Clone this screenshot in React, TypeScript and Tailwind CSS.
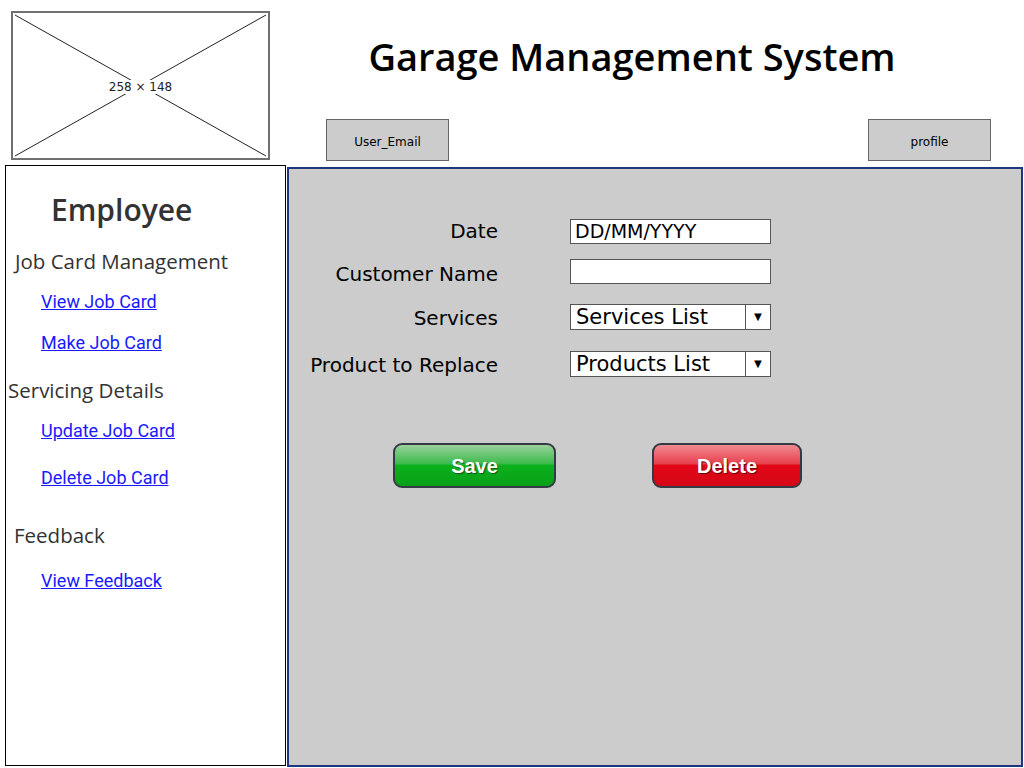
import React from "react";

const sketch = { fontFamily: "'DejaVu Sans', sans-serif" };
const heading = { fontFamily: "'Open Sans', sans-serif" };
const roboto = { fontFamily: "Roboto, sans-serif" };

const links1 = ["View Job Card", "Make Job Card"];

const Placeholder = () => (
  <div className="relative ml-[11px] mt-[11px] w-[259px] h-[149px] border-2 border-[#707070] bg-white">
    <svg className="absolute inset-0" width="255" height="145" viewBox="0 0 255 145">
      <line x1="2" y1="2" x2="253" y2="143" stroke="#222" strokeWidth="1" />
      <line x1="253" y1="2" x2="2" y2="143" stroke="#222" strokeWidth="1" />
    </svg>
    <div className="absolute inset-0 flex items-center justify-center pt-[3px]">
      <span className="bg-white px-[1px] text-[12px] leading-[14px] text-[#222]" style={sketch}>258 × 148</span>
    </div>
  </div>
);

const Field = ({ label, value, nudge }: { label: string; value?: string; nudge?: boolean }) => (
  <div className="flex items-center h-[25px]">
    <div className={"w-[209px] text-right text-[20px] leading-[25px] text-black" + (nudge ? " pt-[6px]" : "")} style={sketch}>{label}</div>
    <div className="ml-[72px] w-[201px] h-[25px] bg-white border border-[#555] px-[4px] flex items-center text-[19px] leading-[23px] text-black" style={sketch}>
      {value}
    </div>
  </div>
);

const Select = ({ label, value }: { label: string; value: string }) => (
  <div className="flex items-center h-[26px]">
    <div className="w-[209px] text-right text-[20px] leading-[25px] pt-[2px] text-black" style={sketch}>{label}</div>
    <div className="ml-[72px] w-[201px] h-[26px] bg-white border border-[#555] flex items-center">
      <span className="flex-1 px-[5px] text-[21px] leading-[24px] text-black" style={sketch}>{value}</span>
      <span className="w-[25px] h-full border-l border-[#555] flex items-center justify-center text-[13px] text-black">▼</span>
    </div>
  </div>
);

export default function App() {
  return (
    <div className="w-[1024px] h-[768px] bg-white overflow-hidden">
      <div className="flex h-[165px]">
        <Placeholder />
        <div className="flex-1 flex flex-col">
          <h1 className="mt-[33px] pr-[30px] text-center text-[38px] leading-[46px] font-semibold text-black" style={heading}>
            Garage Management System
          </h1>
          <div className="mt-[40px] flex justify-between pl-[56px] pr-[33px]">
            <div className="w-[123px] h-[42px] pt-[3px] bg-[#cccccc] border border-[#666] flex items-center justify-center text-[12px] text-black" style={sketch}>User_Email</div>
            <div className="w-[123px] h-[42px] pt-[3px] bg-[#cccccc] border border-[#666] flex items-center justify-center text-[12px] text-black" style={sketch}>profile</div>
          </div>
        </div>
      </div>

      <div className="flex">
        <aside className="ml-[5px] w-[281px] h-[601px] border border-black bg-white pt-[24px] text-[#333]">
          <div className="pl-[45px] text-[30px] leading-[40px] font-semibold" style={heading}>Employee</div>
          <div className="mt-[17px] pl-[9px] text-[20.5px] leading-[28px]" style={heading}>Job Card Management</div>
          {links1.map((l) => (
            <div key={l} className="mt-[13px] pl-[35px] leading-[28px]">
              <a href="#" className="text-[18px] text-[#1a1aff] underline" style={roboto}>{l}</a>
            </div>
          ))}
          <div className="mt-[19px] pl-[2px] text-[20.5px] leading-[28px]" style={heading}>Servicing Details</div>
          <div className="mt-[13px] pl-[35px] leading-[28px]">
            <a href="#" className="text-[18px] text-[#1a1aff] underline" style={roboto}>Update Job Card</a>
          </div>
          <div className="mt-[19px] pl-[35px] leading-[28px]">
            <a href="#" className="text-[18px] text-[#1a1aff] underline" style={roboto}>Delete Job Card</a>
          </div>
          <div className="mt-[29px] pl-[8px] text-[20.5px] leading-[28px]" style={heading}>Feedback</div>
          <div className="mt-[18px] pl-[35px] leading-[28px]">
            <a href="#" className="text-[18px] text-[#1a1aff] underline" style={roboto}>View Feedback</a>
          </div>
        </aside>

        <main className="ml-[1px] mt-[2px] w-[736px] h-[600px] bg-[#cccccc] border-2 border-[#1f3580] pt-[50px]">
          <Field label="Date" value="DD/MM/YYYY" />
          <div className="mt-[15px]"><Field label="Customer Name" nudge /></div>
          <div className="mt-[20px]"><Select label="Services" value="Services List" /></div>
          <div className="mt-[21px]"><Select label="Product to Replace" value="Products List" /></div>

          <div className="mt-[66px] ml-[104px] flex gap-[96px]">
            <button className="w-[163px] h-[45px] rounded-[9px] border-2 border-[#353b45] bg-[linear-gradient(#9ad19a_0%,#3dbb4d_45%,#0ab21c_50%,#0a9f19_100%)] text-white text-[20px] font-bold [text-shadow:1px_1px_1px_#1d4d1d]" style={{ fontFamily: "'Liberation Sans', Arial, sans-serif" }}>
              Save
            </button>
            <button className="w-[150px] h-[45px] rounded-[9px] border-2 border-[#353b45] bg-[linear-gradient(#f08a90_0%,#e9414f_45%,#e10717_50%,#d50616_100%)] text-white text-[20px] font-bold [text-shadow:1px_1px_1px_#5a0a0a]" style={{ fontFamily: "'Liberation Sans', Arial, sans-serif" }}>
              Delete
            </button>
          </div>
        </main>
      </div>
    </div>
  );
}
